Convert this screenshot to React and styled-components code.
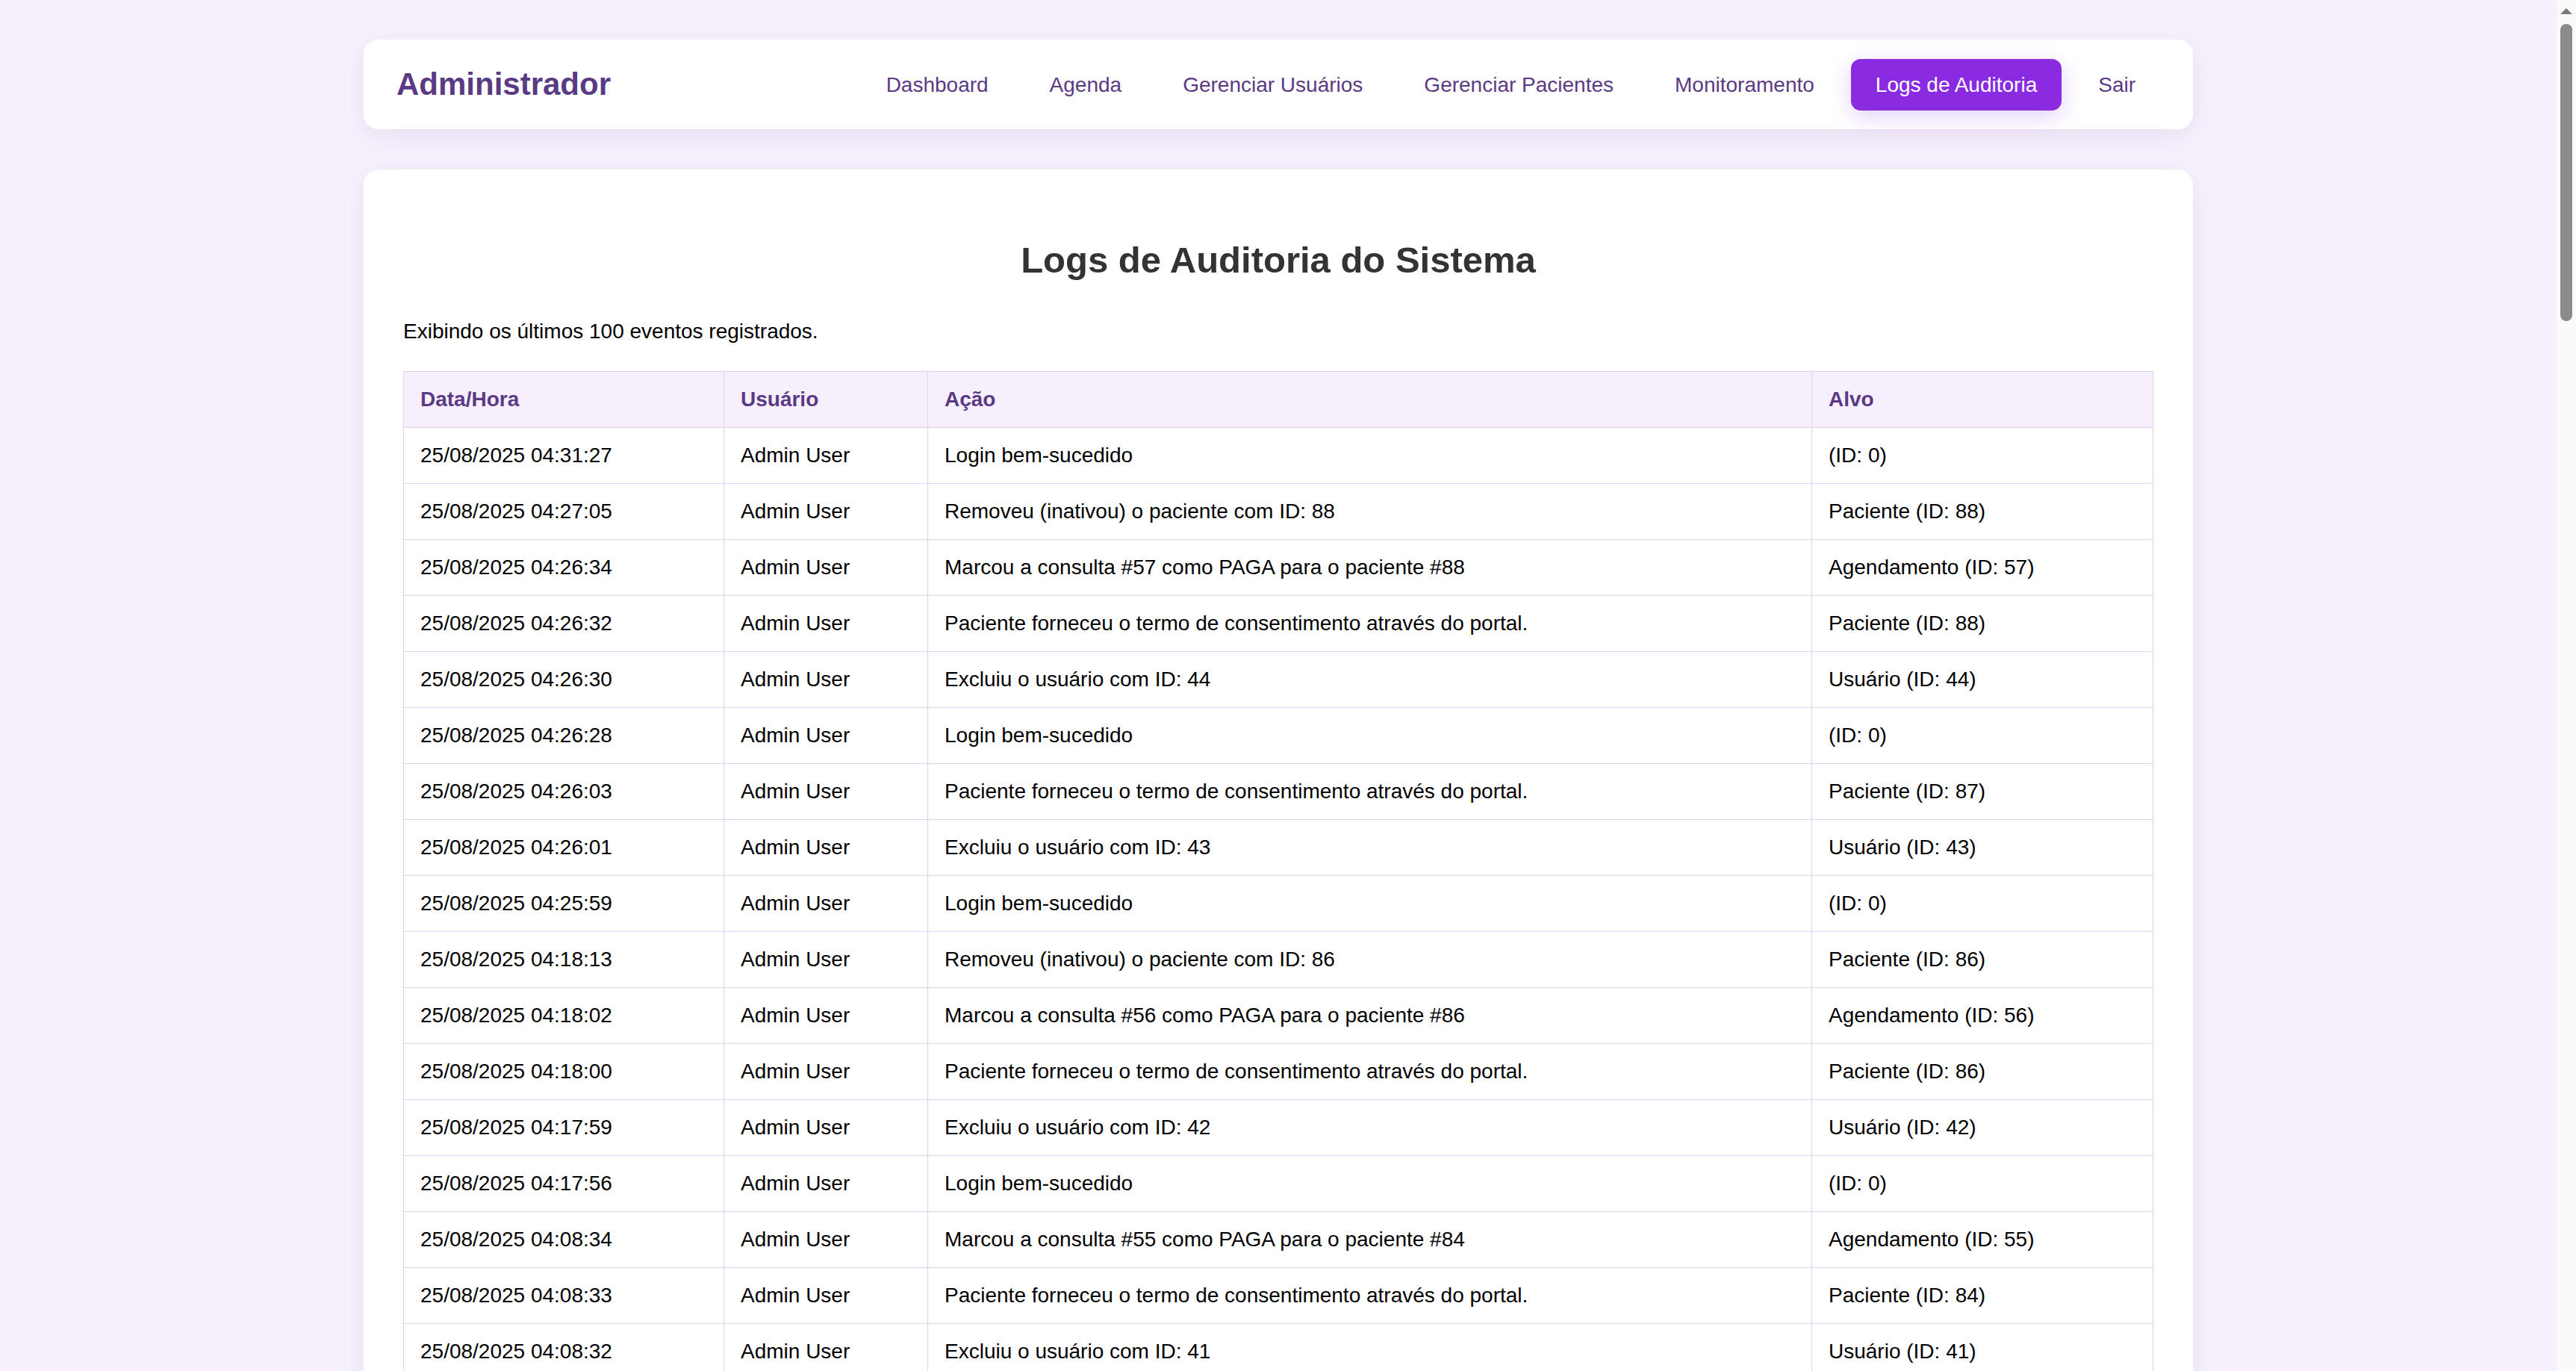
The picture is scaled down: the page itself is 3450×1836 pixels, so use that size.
import React from "react";
import styled, { createGlobalStyle } from "styled-components";

const GlobalStyle = createGlobalStyle`
  body {
    margin: 0;
    background: #f7f0fc;
    font-family: "Liberation Sans", Arial, sans-serif;
  }
  ::-webkit-scrollbar {
    display: none;
  }
`;

const CONSENT = "Paciente forneceu o termo de consentimento através do portal.";

const firstLogs = [
  ["04:31:27", "Login bem-sucedido", "(ID: 0)"],
  ["04:27:05", "Removeu (inativou) o paciente com ID: 88", "Paciente (ID: 88)"],
  ["04:26:34", "Marcou a consulta #57 como PAGA para o paciente #88", "Agendamento (ID: 57)"],
  ["04:26:32", CONSENT, "Paciente (ID: 88)"],
  ["04:26:30", "Excluiu o usuário com ID: 44", "Usuário (ID: 44)"],
  ["04:26:28", "Login bem-sucedido", "(ID: 0)"],
  ["04:26:03", CONSENT, "Paciente (ID: 87)"],
  ["04:26:01", "Excluiu o usuário com ID: 43", "Usuário (ID: 43)"],
  ["04:25:59", "Login bem-sucedido", "(ID: 0)"],
  ["04:18:13", "Removeu (inativou) o paciente com ID: 86", "Paciente (ID: 86)"],
  ["04:18:02", "Marcou a consulta #56 como PAGA para o paciente #86", "Agendamento (ID: 56)"],
  ["04:18:00", CONSENT, "Paciente (ID: 86)"],
  ["04:17:59", "Excluiu o usuário com ID: 42", "Usuário (ID: 42)"],
  ["04:17:56", "Login bem-sucedido", "(ID: 0)"],
  ["04:08:34", "Marcou a consulta #55 como PAGA para o paciente #84", "Agendamento (ID: 55)"],
  ["04:08:33", CONSENT, "Paciente (ID: 84)"],
  ["04:08:32", "Excluiu o usuário com ID: 41", "Usuário (ID: 41)"],
];

const pad = (n) => String(n).padStart(2, "0");
const clock = (s) => `${pad(Math.floor(s / 3600))}:${pad(Math.floor(s / 60) % 60)}:${pad(s % 60)}`;

// older entries follow the same routine, going back in time
const buildLogs = () => {
  const rows = firstLogs.map(([time, action, target]) => ({ time, action, target }));
  let t = 4 * 3600 + 8 * 60 + 30;
  let patient = 82;
  let consulta = 54;
  let user = 40;
  rows.push({ time: clock(t), action: "Login bem-sucedido", target: "(ID: 0)" });
  while (rows.length < 100) {
    t -= 520;
    const block = [
      [0, `Removeu (inativou) o paciente com ID: ${patient}`, `Paciente (ID: ${patient})`],
      [11, `Marcou a consulta #${consulta} como PAGA para o paciente #${patient}`, `Agendamento (ID: ${consulta})`],
      [13, CONSENT, `Paciente (ID: ${patient})`],
      [15, `Excluiu o usuário com ID: ${user}`, `Usuário (ID: ${user})`],
      [17, "Login bem-sucedido", "(ID: 0)"],
    ];
    block.forEach(([d, action, target]) => {
      if (rows.length < 100) rows.push({ time: clock(t - d), action, target });
    });
    t -= 17;
    patient -= 2;
    consulta -= 1;
    user -= 1;
  }
  return rows;
};

const logs = buildLogs();

const links = [
  "Dashboard",
  "Agenda",
  "Gerenciar Usuários",
  "Gerenciar Pacientes",
  "Monitoramento",
  "Logs de Auditoria",
  "Sair",
];

const columns = [
  { label: "Data/Hora", width: 429 },
  { label: "Usuário", width: 273 },
  { label: "Ação", width: 1184 },
  { label: "Alvo", width: 457 },
];

const App = () => {
  return (
    <>
      <GlobalStyle />
      <Page>
        <Navbar>
          <Brand>Administrador</Brand>
          <NavList>
            {links.map((link) => (
              <NavLink key={link} href="#" $active={link === "Logs de Auditoria"}>
                {link}
              </NavLink>
            ))}
          </NavList>
        </Navbar>
        <Card>
          <Title>Logs de Auditoria do Sistema</Title>
          <Intro>Exibindo os últimos 100 eventos registrados.</Intro>
          <Table>
            <colgroup>
              {columns.map((col) => (
                <Col key={col.label} $w={col.width} />
              ))}
            </colgroup>
            <thead>
              <tr>
                {columns.map((col) => (
                  <Th key={col.label}>{col.label}</Th>
                ))}
              </tr>
            </thead>
            <tbody>
              {logs.map((log, index) => (
                <tr key={index}>
                  <Td>25/08/2025 {log.time}</Td>
                  <Td>Admin User</Td>
                  <Td>{log.action}</Td>
                  <Td>{log.target}</Td>
                </tr>
              ))}
            </tbody>
          </Table>
        </Card>
      </Page>
      <ScrollTrack>
        <ScrollArrow />
        <ScrollThumb />
      </ScrollTrack>
    </>
  );
};

const Page = styled.div`
  display: flex;
  flex-direction: column;
  align-items: center;
  gap: 54px;
  padding: 53px 26px 53px 0;
`;

const Navbar = styled.header`
  box-sizing: border-box;
  width: 2450px;
  height: 120px;
  padding: 0 44px;
  display: flex;
  align-items: center;
  justify-content: space-between;
  background: #ffffff;
  border-radius: 20px;
  box-shadow: 0 9px 33px rgba(90, 50, 130, 0.09);
`;

const Brand = styled.h1`
  margin: 0;
  font-size: 42px;
  font-weight: 700;
  color: #5a3a85;
`;

const NavList = styled.nav`
  display: flex;
  align-items: center;
  gap: 16px;
`;

const NavLink = styled.a`
  padding: 18px 33px;
  font-size: 28px;
  line-height: 33px;
  text-decoration: none;
  border-radius: 13px;
  color: ${(p) => (p.$active ? "#ffffff" : "#5a3a85")};
  background: ${(p) => (p.$active ? "#8a2be2" : "transparent")};
  box-shadow: ${(p) => (p.$active ? "0 9px 30px rgba(138, 43, 226, 0.22)" : "none")};
`;

const Card = styled.main`
  box-sizing: border-box;
  width: 2450px;
  padding: 53px;
  background: #ffffff;
  border-radius: 20px;
  box-shadow: 0 9px 33px rgba(90, 50, 130, 0.09);
`;

const Title = styled.h2`
  margin: 40px 0 52px;
  text-align: center;
  font-size: 49px;
  line-height: 56px;
  font-weight: 700;
  color: #333333;
`;

const Intro = styled.p`
  margin: 0 0 37px;
  font-size: 28px;
  line-height: 32px;
  color: #000000;
`;

const Table = styled.table`
  width: 100%;
  border-collapse: collapse;
  table-layout: fixed;
`;

const Col = styled.col`
  width: ${(p) => p.$w}px;
`;

const Th = styled.th`
  padding: 21px 22px;
  text-align: left;
  font-size: 28px;
  line-height: 32px;
  font-weight: 700;
  color: #5a3a85;
  background: #f7effc;
  border: 1px solid #e0d1f2;
`;

const Td = styled.td`
  padding: 21px 22px;
  font-size: 28px;
  line-height: 32px;
  color: #000000;
  border: 1px solid #e0d1f2;
  white-space: nowrap;
`;

/* stand-in for the browser's scrollbar seen in the screenshot */
const ScrollTrack = styled.div`
  position: fixed;
  top: 0;
  right: 0;
  width: 26px;
  height: 100vh;
  box-sizing: border-box;
  padding: 11px 5px 0;
  display: flex;
  flex-direction: column;
  align-items: center;
  gap: 13px;
  background: #fafafa;
`;

const ScrollArrow = styled.div`
  width: 0;
  height: 0;
  border-left: 8px solid transparent;
  border-right: 8px solid transparent;
  border-bottom: 8px solid #7a7a7a;
`;

const ScrollThumb = styled.div`
  width: 16px;
  height: 398px;
  border-radius: 8px;
  background: #8b8b8b;
`;

export default App;
